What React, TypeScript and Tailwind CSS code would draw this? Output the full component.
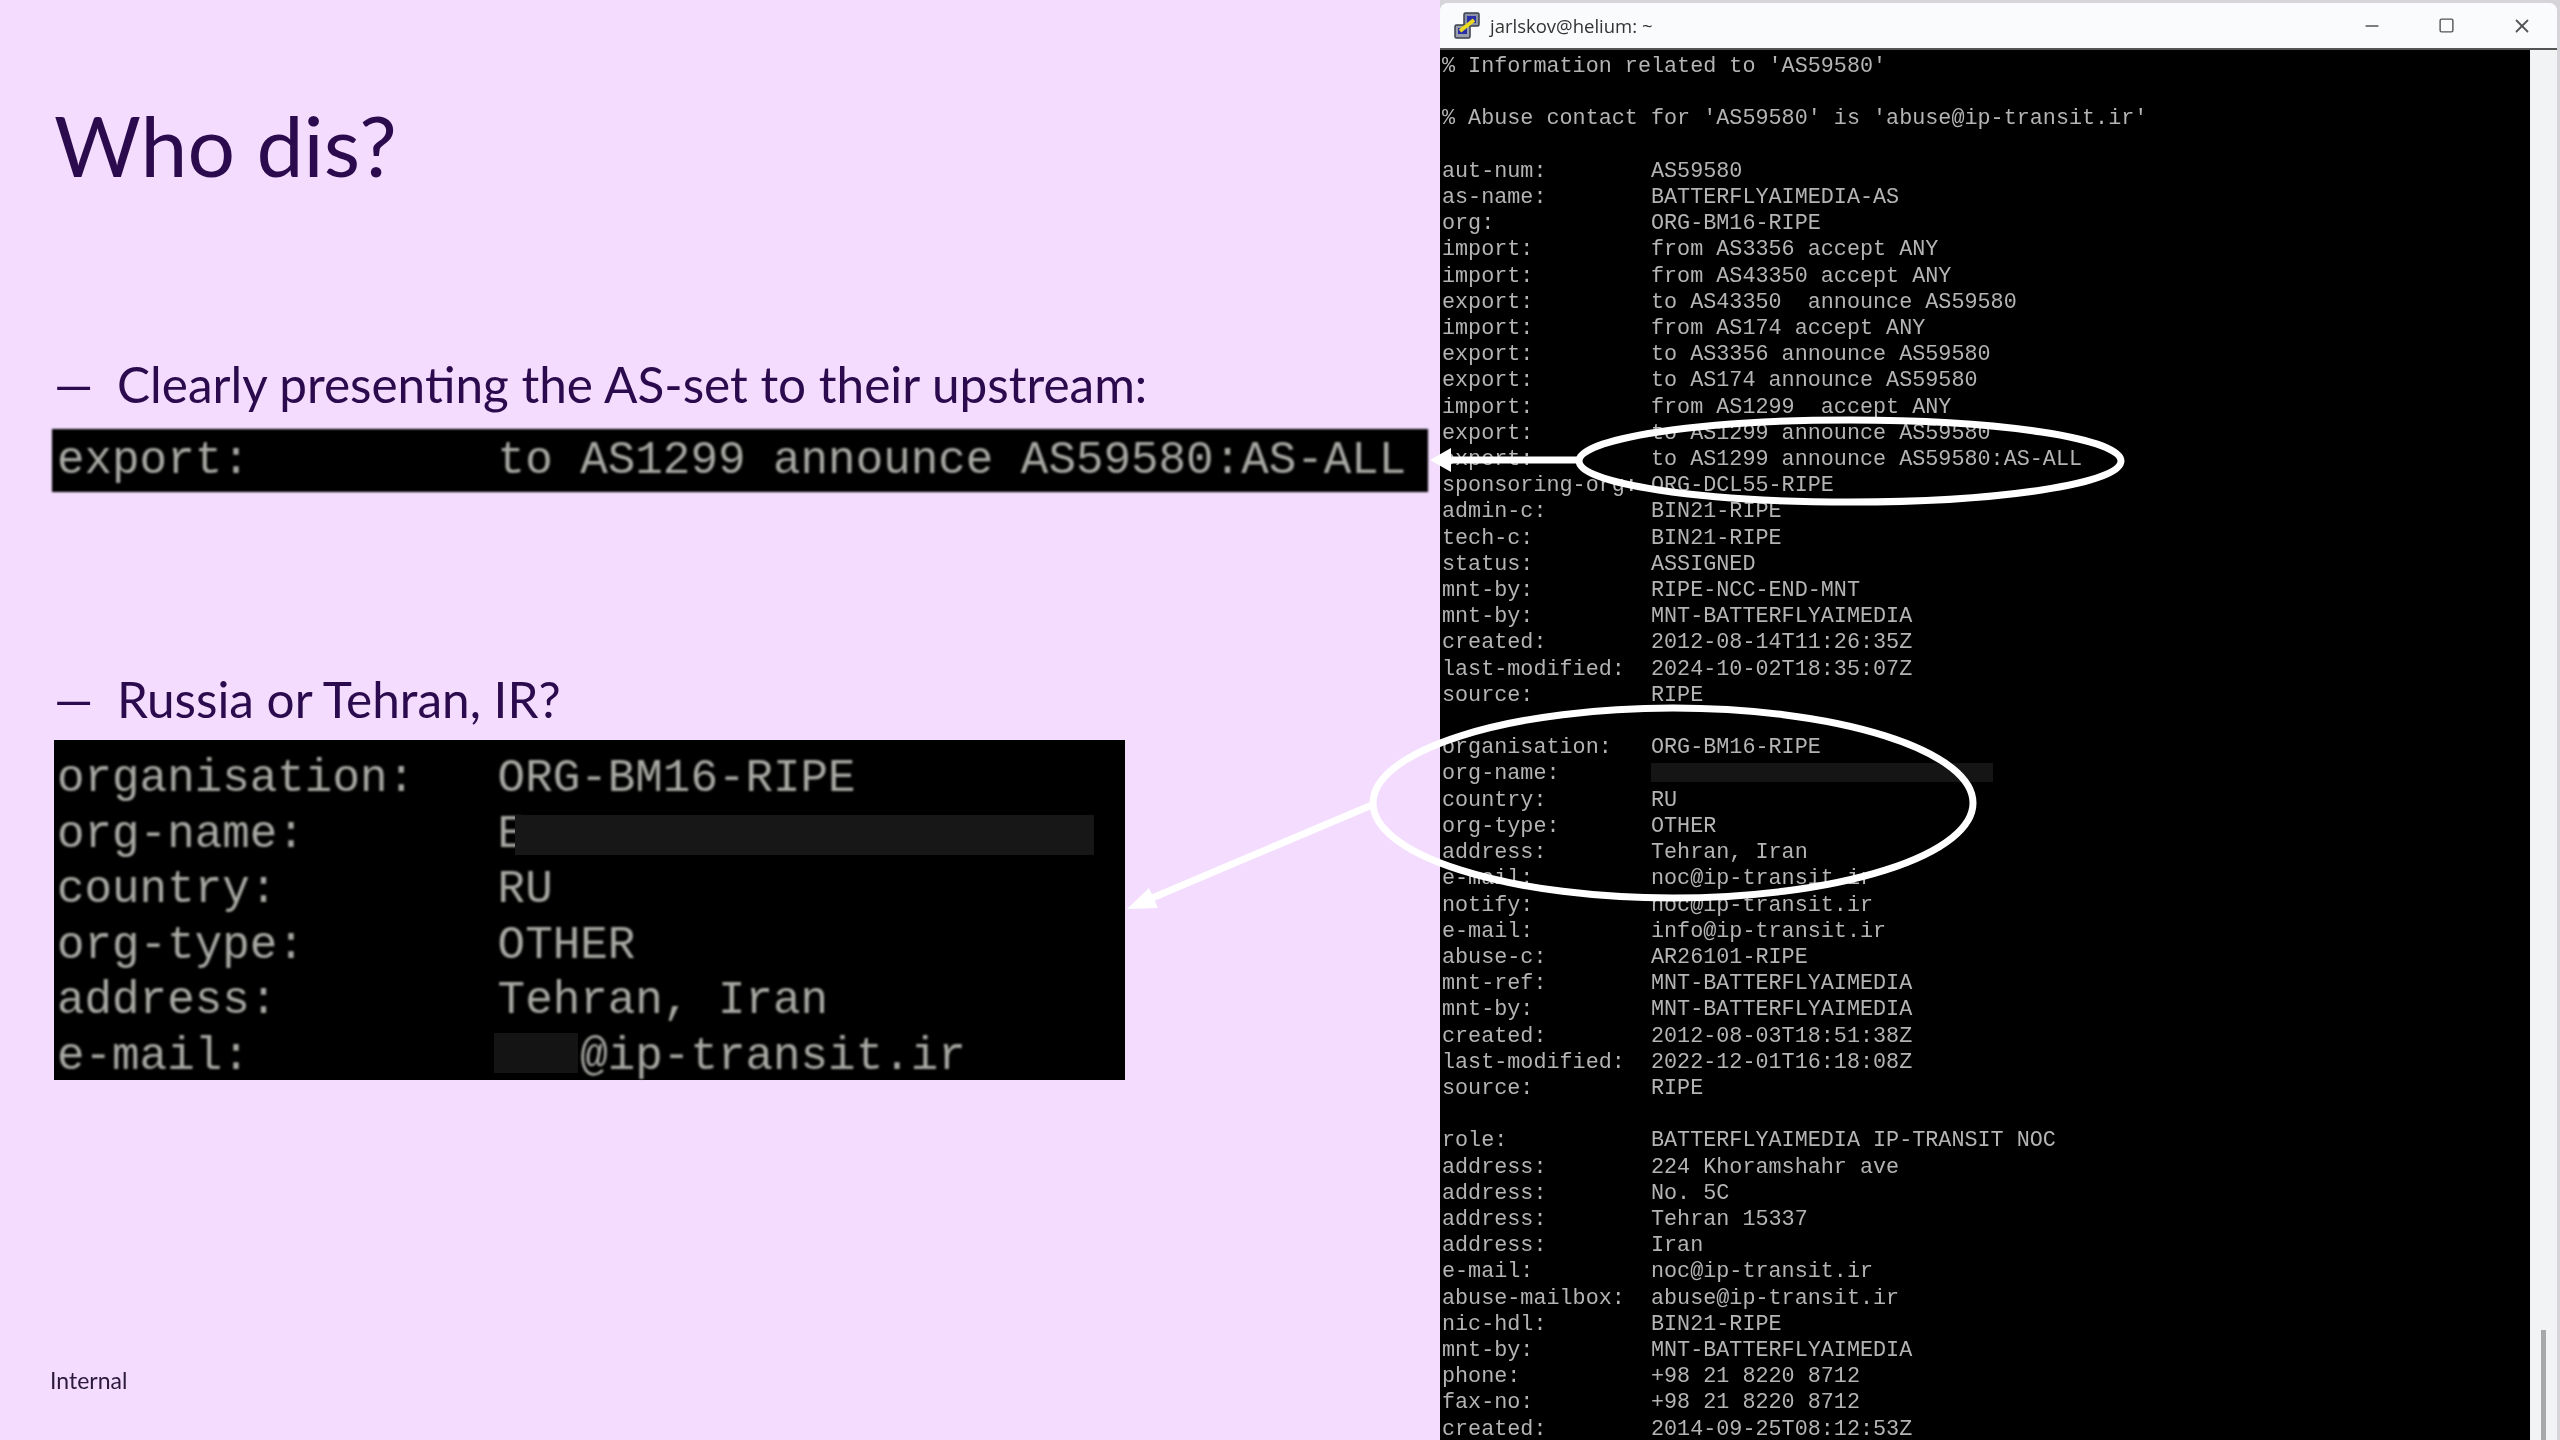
import { Minus, Square, X } from 'lucide-react'

const terminalLines = [
  "% Information related to 'AS59580'",
  '',
  "% Abuse contact for 'AS59580' is 'abuse@ip-transit.ir'",
  '',
  'aut-num:        AS59580',
  'as-name:        BATTERFLYAIMEDIA-AS',
  'org:            ORG-BM16-RIPE',
  'import:         from AS3356 accept ANY',
  'import:         from AS43350 accept ANY',
  'export:         to AS43350  announce AS59580',
  'import:         from AS174 accept ANY',
  'export:         to AS3356 announce AS59580',
  'export:         to AS174 announce AS59580',
  'import:         from AS1299  accept ANY',
  'export:         to AS1299 announce AS59580',
  'export:         to AS1299 announce AS59580:AS-ALL',
  'sponsoring-org: ORG-DCL55-RIPE',
  'admin-c:        BIN21-RIPE',
  'tech-c:         BIN21-RIPE',
  'status:         ASSIGNED',
  'mnt-by:         RIPE-NCC-END-MNT',
  'mnt-by:         MNT-BATTERFLYAIMEDIA',
  'created:        2012-08-14T11:26:35Z',
  'last-modified:  2024-10-02T18:35:07Z',
  'source:         RIPE',
  '',
  'organisation:   ORG-BM16-RIPE',
  'org-name:',
  'country:        RU',
  'org-type:       OTHER',
  'address:        Tehran, Iran',
  'e-mail:         noc@ip-transit.ir',
  'notify:         noc@ip-transit.ir',
  'e-mail:         info@ip-transit.ir',
  'abuse-c:        AR26101-RIPE',
  'mnt-ref:        MNT-BATTERFLYAIMEDIA',
  'mnt-by:         MNT-BATTERFLYAIMEDIA',
  'created:        2012-08-03T18:51:38Z',
  'last-modified:  2022-12-01T16:18:08Z',
  'source:         RIPE',
  '',
  'role:           BATTERFLYAIMEDIA IP-TRANSIT NOC',
  'address:        224 Khoramshahr ave',
  'address:        No. 5C',
  'address:        Tehran 15337',
  'address:        Iran',
  'e-mail:         noc@ip-transit.ir',
  'abuse-mailbox:  abuse@ip-transit.ir',
  'nic-hdl:        BIN21-RIPE',
  'mnt-by:         MNT-BATTERFLYAIMEDIA',
  'phone:          +98 21 8220 8712',
  'fax-no:         +98 21 8220 8712',
  'created:        2014-09-25T08:12:53Z',
]

function PuttyIcon() {
  return (
    <svg width="30" height="32" viewBox="0 0 30 32" className="shrink-0">
      <rect x="12" y="3" width="15" height="13" rx="1.5" fill="#8a93a6" stroke="#3a3f4c" strokeWidth="1.5" />
      <rect x="15" y="6" width="9" height="7" fill="#2a2fa8" />
      <rect x="3" y="15" width="15" height="13" rx="1.5" fill="#9aa0ab" stroke="#3a3f4c" strokeWidth="1.5" />
      <rect x="6" y="18" width="9" height="6" fill="#2a2fa8" />
      <path d="M8 21 L22 10" stroke="#e8d820" strokeWidth="4" />
    </svg>
  )
}

function Terminal() {
  return (
    <div className="w-[1120px] h-[1440px] shrink-0 pt-[3px] pr-[3px] bg-[#d6d4d8]">
      <div className="h-full flex flex-col bg-[#f2f3f4] overflow-hidden rounded-t-lg">
        <div className="h-[47px] shrink-0 flex items-center pl-[12px] pr-[24px] bg-[#fafbfc] border-b-2 border-[#555] blur-[0.5px]">
          <PuttyIcon />
          <span className="ml-[8px] text-[#333] text-[18.5px] font-['Open_Sans',sans-serif]">jarlskov@helium: ~</span>
          <div className="ml-auto flex items-center gap-[56px] text-[#555]">
            <Minus size={20} strokeWidth={2} />
            <Square size={17} strokeWidth={2} />
            <X size={22} strokeWidth={2} />
          </div>
        </div>
        <div className="flex flex-1 min-h-0">
          <div className="w-[1090px] bg-black pt-[4px] relative overflow-hidden">
            <pre className="pl-[2px] text-[21.78px] leading-[26.2px] text-[#b4b4b4] font-['Liberation_Mono',monospace] blur-[0.7px]">
              {terminalLines.join('\n')}
            </pre>
            <div className="absolute left-[211px] top-[713px] w-[342px] h-[19px] bg-[#151515]" />
          </div>
          <div className="flex-1 flex justify-center items-end">
            <div className="w-[5px] h-[110px] bg-[#a8a8a8]" />
          </div>
        </div>
      </div>
    </div>
  )
}

function Annotations() {
  return (
    <svg className="absolute left-0 top-0 pointer-events-none" width="2560" height="1440" viewBox="0 0 2560 1440" fill="none">
      <ellipse cx="1850" cy="461" rx="271" ry="41" stroke="white" strokeWidth="7" />
      <ellipse cx="1673" cy="803" rx="300" ry="95" stroke="white" strokeWidth="7" />
      <path d="M1579 460 H1445" stroke="white" strokeWidth="7" />
      <path d="M1430 460 L1451 448 V472 Z" fill="white" />
      <path d="M1372 805 L1145 901" stroke="white" strokeWidth="7" />
      <path d="M1127 909 L1149 888 L1158 908 Z" fill="white" />
    </svg>
  )
}

export default function App() {
  return (
    <div className="relative w-[2560px] h-[1440px] overflow-hidden flex bg-[#f3dcfd] font-['Lato',sans-serif]">
      {/* Slide */}
      <div className="w-[1440px] shrink-0 flex flex-col pl-[54px] text-[#2b0b4d]">
        <h1 className="mt-[88px] text-[84px] leading-[114px] font-normal">Who dis?</h1>

        <p className="mt-[152px] flex text-[49.5px] leading-[60px]">
          <span className="w-[63px] shrink-0">—</span>
          Clearly presenting the AS-set to their upstream:
        </p>
        <pre className="mt-[15px] -ml-[2px] w-[1376px] h-[63px] bg-black pl-[5px] flex items-center text-[45.9px] leading-[56px] text-[#a8a8a4] font-['Liberation_Mono',monospace] blur-[0.8px]">
          export:         to AS1299 announce AS59580:AS-ALL
        </pre>

        <p className="mt-[177px] flex text-[49.5px] leading-[60px]">
          <span className="w-[63px] shrink-0">—</span>
          Russia or Tehran, IR?
        </p>
        <div className="relative mt-[11px] w-[1071px] h-[340px] bg-black pl-[3px] pt-[12px]">
          <pre className="text-[45.9px] leading-[55.5px] text-[#a8a8a4] font-['Liberation_Mono',monospace] blur-[0.8px]">
            {[
              'organisation:   ORG-BM16-RIPE',
              'org-name:       E',
              'country:        RU',
              'org-type:       OTHER',
              'address:        Tehran, Iran',
              'e-mail:            @ip-transit.ir',
            ].join('\n')}
          </pre>
          <div className="absolute left-[461px] top-[75px] w-[579px] h-[40px] bg-[#171717]" />
          <div className="absolute left-[440px] top-[293px] w-[84px] h-[40px] bg-[#141414]" />
        </div>

        <span className="mt-[286px] -ml-[4px] text-[23px] leading-[28px] text-[#2b1a3d] blur-[0.4px]">Internal</span>
      </div>

      <Terminal />
      <Annotations />
    </div>
  )
}
